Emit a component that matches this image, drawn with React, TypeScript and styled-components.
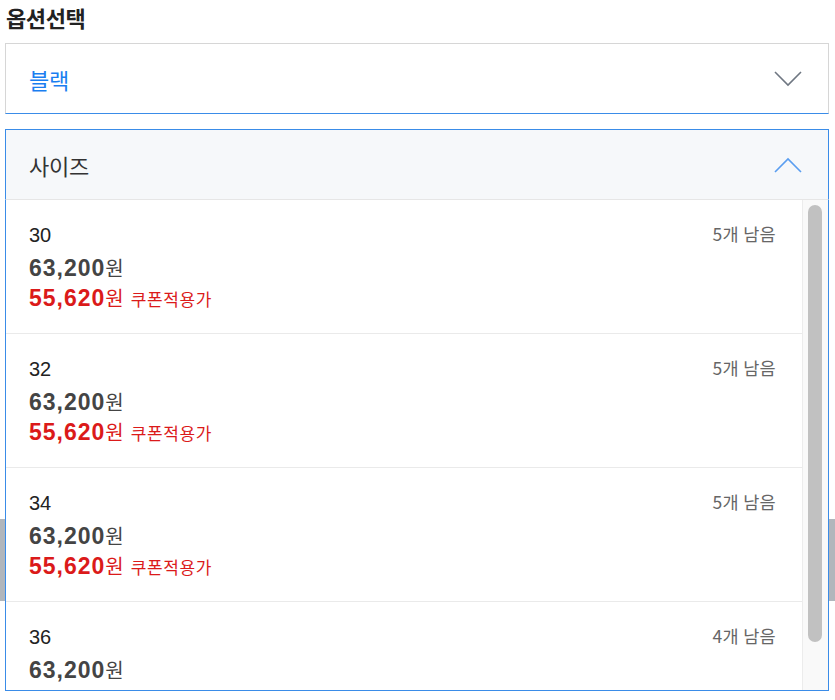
import styled, { createGlobalStyle } from "styled-components";

const GlobalStyle = createGlobalStyle`
  body {
    margin: 0;
    background: #fff;
    font-family: "Liberation Sans", "Noto Sans CJK KR", sans-serif;
  }
`;

const sizes = [
  { size: "30", price: "63,200", sale: "55,620", stock: 5 },
  { size: "32", price: "63,200", sale: "55,620", stock: 5 },
  { size: "34", price: "63,200", sale: "55,620", stock: 5 },
  { size: "36", price: "63,200", sale: "55,620", stock: 4 },
];

const Page = styled.div`
  width: 835px;
  height: 700px;
  overflow: hidden;
`;

const OptionArea = styled.div`
  padding: 0 6px 0 5px;
`;

const Title = styled.h3`
  margin: 0;
  padding: 3px 0 0 1px;
  height: 40px;
  font-size: 22px;
  font-weight: 700;
  color: #222;
  font-family: "Noto Sans CJK KR", sans-serif;
  line-height: 28px;
  letter-spacing: -0.4px;
`;

const Select = styled.div<{ open?: boolean }>`
  position: relative;
  border: 1px solid ${(p) => (p.open ? "#3a8ce8" : "#d6d6d6")};
  border-bottom-color: #3a8ce8;
  margin-bottom: ${(p) => (p.open ? "0" : "15px")};
`;

const SelectHead = styled.div<{ open?: boolean }>`
  display: flex;
  align-items: center;
  justify-content: space-between;
  height: 69px;
  padding: 0 26px 0 23px;
  background: ${(p) => (p.open ? "#f6f8fa" : "#fff")};
`;

const SelectLabel = styled.span<{ picked?: boolean }>`
  font-family: "Noto Sans CJK KR", sans-serif;
  font-size: 22px;
  color: ${(p) => (p.picked ? "#1a7ef0" : "#333")};
  letter-spacing: -0.3px;
`;

const List = styled.div`
  position: absolute;
  left: -1px;
  right: -1px;
  top: 69px;
  height: 490px;
  display: flex;
  background: #fff;
  border: 1px solid #3a8ce8;
  border-top: 1px solid #e6e6e6;
  z-index: 2;
`;

const Items = styled.div`
  flex: 1;
  overflow: hidden;
`;

const ScrollTrack = styled.div`
  box-sizing: border-box;
  width: 26px;
  flex-shrink: 0;
  background: #f9f9f9;
  border-left: 1px solid #ececec;
  padding: 5px 6px 0 5px;
`;

const ScrollThumb = styled.div`
  height: 437px;
  border-radius: 7px;
  background: #c1c1c1;
`;

const Item = styled.div`
  display: flex;
  justify-content: space-between;
  padding: 22px 26px 24px 23px;
  border-bottom: 1px solid #eaeaea;
  height: 87px;
`;

const Info = styled.div`
  display: flex;
  flex-direction: column;
`;

const SizeName = styled.span`
  font-size: 20px;
  line-height: 26px;
  color: #222;
`;

const Price = styled.span<{ sale?: boolean }>`
  font-size: 23px;
  line-height: ${(p) => (p.sale ? "19px" : "40px")};
  font-weight: 700;
  letter-spacing: 1px;
  color: ${(p) => (p.sale ? "#db1a1a" : "#444")};
`;

const Won = styled.span`
  font-family: "Noto Sans CJK KR", sans-serif;
  font-weight: 400;
  font-size: 20px;
  letter-spacing: 0;
`;

const CouponNote = styled.span`
  font-family: "Noto Sans CJK KR", sans-serif;
  font-weight: 400;
  font-size: 17px;
  letter-spacing: 0.6px;
  margin-left: 7px;
`;

const Stock = styled.span`
  font-family: "Noto Sans CJK KR", sans-serif;
  font-size: 17.5px;
  line-height: 24px;
  color: #666;
  letter-spacing: 0.3px;
`;

const Below = styled.div`
  margin-top: 319px;
  height: 82px;
  background: #b1b6bc;
`;

const Chevron = ({ up, color }: { up?: boolean; color: string }) => (
  <svg width="28" height="16" viewBox="0 0 28 16" fill="none">
    <path
      d={up ? "M1 15 L14 2 L27 15" : "M1 1 L14 14 L27 1"}
      stroke={color}
      strokeWidth="1.6"
    />
  </svg>
);

export default function App() {
  return (
    <Page>
      <GlobalStyle />
      <OptionArea>
        <Title>옵션선택</Title>
        <Select>
          <SelectHead>
            <SelectLabel picked>블랙</SelectLabel>
            <Chevron color="#6f7782" />
          </SelectHead>
        </Select>
        <Select open>
          <SelectHead open>
            <SelectLabel>사이즈</SelectLabel>
            <Chevron up color="#5a9ef0" />
          </SelectHead>
          <List>
            <Items>
              {sizes.map((s) => (
                <Item key={s.size}>
                  <Info>
                    <SizeName>{s.size}</SizeName>
                    <Price>
                      {s.price}
                      <Won>원</Won>
                    </Price>
                    <Price sale>
                      {s.sale}
                      <Won>원</Won>
                      <CouponNote>쿠폰적용가</CouponNote>
                    </Price>
                  </Info>
                  <Stock>{s.stock}개 남음</Stock>
                </Item>
              ))}
            </Items>
            <ScrollTrack>
              <ScrollThumb />
            </ScrollTrack>
          </List>
        </Select>
      </OptionArea>
      <Below />
    </Page>
  );
}
